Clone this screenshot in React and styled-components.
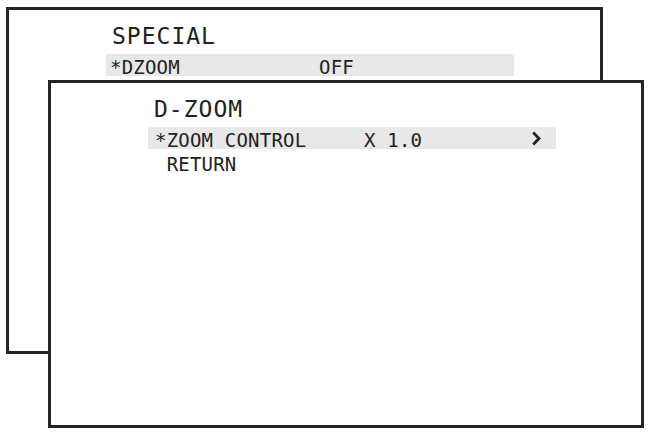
import React from 'react';
import styled, { createGlobalStyle } from 'styled-components';

const GlobalStyle = createGlobalStyle`
  html, body {
    margin: 0;
    padding: 0;
    background: #ffffff;
  }
  body {
    font-family: "DejaVu Sans Mono", "Liberation Mono", monospace;
    color: #222;
  }
`;

// both menu screens share one grid cell, the front one drawn over the back one
export const Desk = styled.div`
  display: grid;
  width: 650px;
  height: 433px;
  overflow: hidden;
`;

export const Screen = styled.section`
  grid-area: 1 / 1;
  box-sizing: border-box;
  margin-left: ${(p) => p.x}px;
  margin-top: ${(p) => p.y}px;
  width: ${(p) => p.w}px;
  height: ${(p) => p.h}px;
  background: #fff;
  border: 3px solid #242424;
  padding: 13px 0 0 97px;
  display: flex;
  flex-direction: column;
  gap: 2px;
`;

export const Title = styled.h2`
  margin: 0 0 3px 6px;
  font-size: 23px;
  line-height: 26px;
  font-weight: normal;
  letter-spacing: 1px;
`;

export const Row = styled.div`
  display: flex;
  width: 408px;
  height: 22px;
  box-sizing: border-box;
  padding-left: ${(p) => p.indent}px;
  background: ${(p) => (p.active ? '#e8e8e8' : 'transparent')};
  font-size: 19px;
  line-height: 26px;
  letter-spacing: 0.2px;
  white-space: pre;
`;

export const Label = styled.span`
  width: 209px;
  flex: none;
`;

export const Value = styled.span`
  flex: 1;
`;

export const Arrow = styled.svg`
  flex: none;
  margin: 4px 14px 0 0;
`;

const Chevron = () => (
  <Arrow width="11" height="15" viewBox="0 0 11 15">
    <path d="M2.2 1.5 L8 7.5 L2.2 13.5" fill="none" stroke="#222" strokeWidth="2.8" />
  </Arrow>
);

export default function App() {
  return (
    <>
      <GlobalStyle />
      <Desk>
        <Screen x={6} y={7} w={597} h={347}>
          <Title>SPECIAL</Title>
          <Row active indent={4}>
            <Label>*DZOOM</Label>
            <Value>OFF</Value>
          </Row>
        </Screen>
        <Screen x={48} y={80} w={596} h={348}>
          <Title>D-ZOOM</Title>
          <Row active indent={7}>
            <Label>*ZOOM CONTROL</Label>
            <Value>X 1.0</Value>
            <Chevron />
          </Row>
          <Row indent={7}>
            <Label> RETURN</Label>
          </Row>
        </Screen>
      </Desk>
    </>
  );
}
